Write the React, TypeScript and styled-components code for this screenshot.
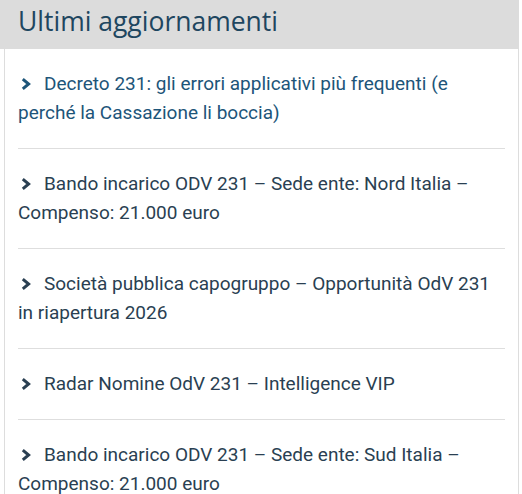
import React from "react";
import styled, { createGlobalStyle } from "styled-components";

const Global = createGlobalStyle`
  html, body { margin: 0; padding: 0; background: #ffffff; }
  body { font-family: Roboto, "Liberation Sans", sans-serif; }
`;

const Widget = styled.section`
  width: 519px;
`;

const Header = styled.h2`
  margin: 0;
  height: 49px;
  box-sizing: border-box;
  padding: 3px 0 0 18px;
  background: #dcdcdc;
  font-family: "Open Sans", "Liberation Sans", sans-serif;
  font-weight: 400;
  font-size: 26.5px;
  line-height: 36px;
  color: #1e4660;
`;

const Panel = styled.ul`
  list-style: none;
  margin: 0 0 0 4px;
  padding: 0 13px 0 13px;
  border-left: 1px solid #dddddd;
  border-right: 1px solid #dddddd;
`;

const Item = styled.li`
  padding: 20px 0 21px;
  border-bottom: 1px solid #dedede;
  font-size: 19px;
  line-height: 29px;
`;

const Link = styled.a<{ $active?: boolean }>`
  color: ${(p) => (p.$active ? "#1d5579" : "#2a3f52")};
  text-decoration: none;
`;

const Chevron = styled.svg`
  width: 10px;
  height: 12px;
  margin: 0 13px 0 3px;
  vertical-align: 0px;
`;

const items = [
  "Decreto 231: gli errori applicativi più frequenti (e perché la Cassazione li boccia)",
  "Bando incarico ODV 231 – Sede ente: Nord Italia – Compenso: 21.000 euro",
  "Società pubblica capogruppo – Opportunità OdV 231 in riapertura 2026",
  "Radar Nomine OdV 231 – Intelligence VIP",
  "Bando incarico ODV 231 – Sede ente: Sud Italia – Compenso: 21.000 euro",
];

export default function App() {
  return (
    <>
      <Global />
      <Widget>
        <Header>Ultimi aggiornamenti</Header>
        <Panel>
          {items.map((t, i) => (
            <Item key={i}>
              <Link href="#" $active={i === 0}>
                <Chevron viewBox="0 0 10 12">
                  <path d="M1.8 1.2 L7.6 6 L1.8 10.8" fill="none" stroke="currentColor" strokeWidth="3" />
                </Chevron>
                {t}
              </Link>
            </Item>
          ))}
        </Panel>
      </Widget>
    </>
  );
}
